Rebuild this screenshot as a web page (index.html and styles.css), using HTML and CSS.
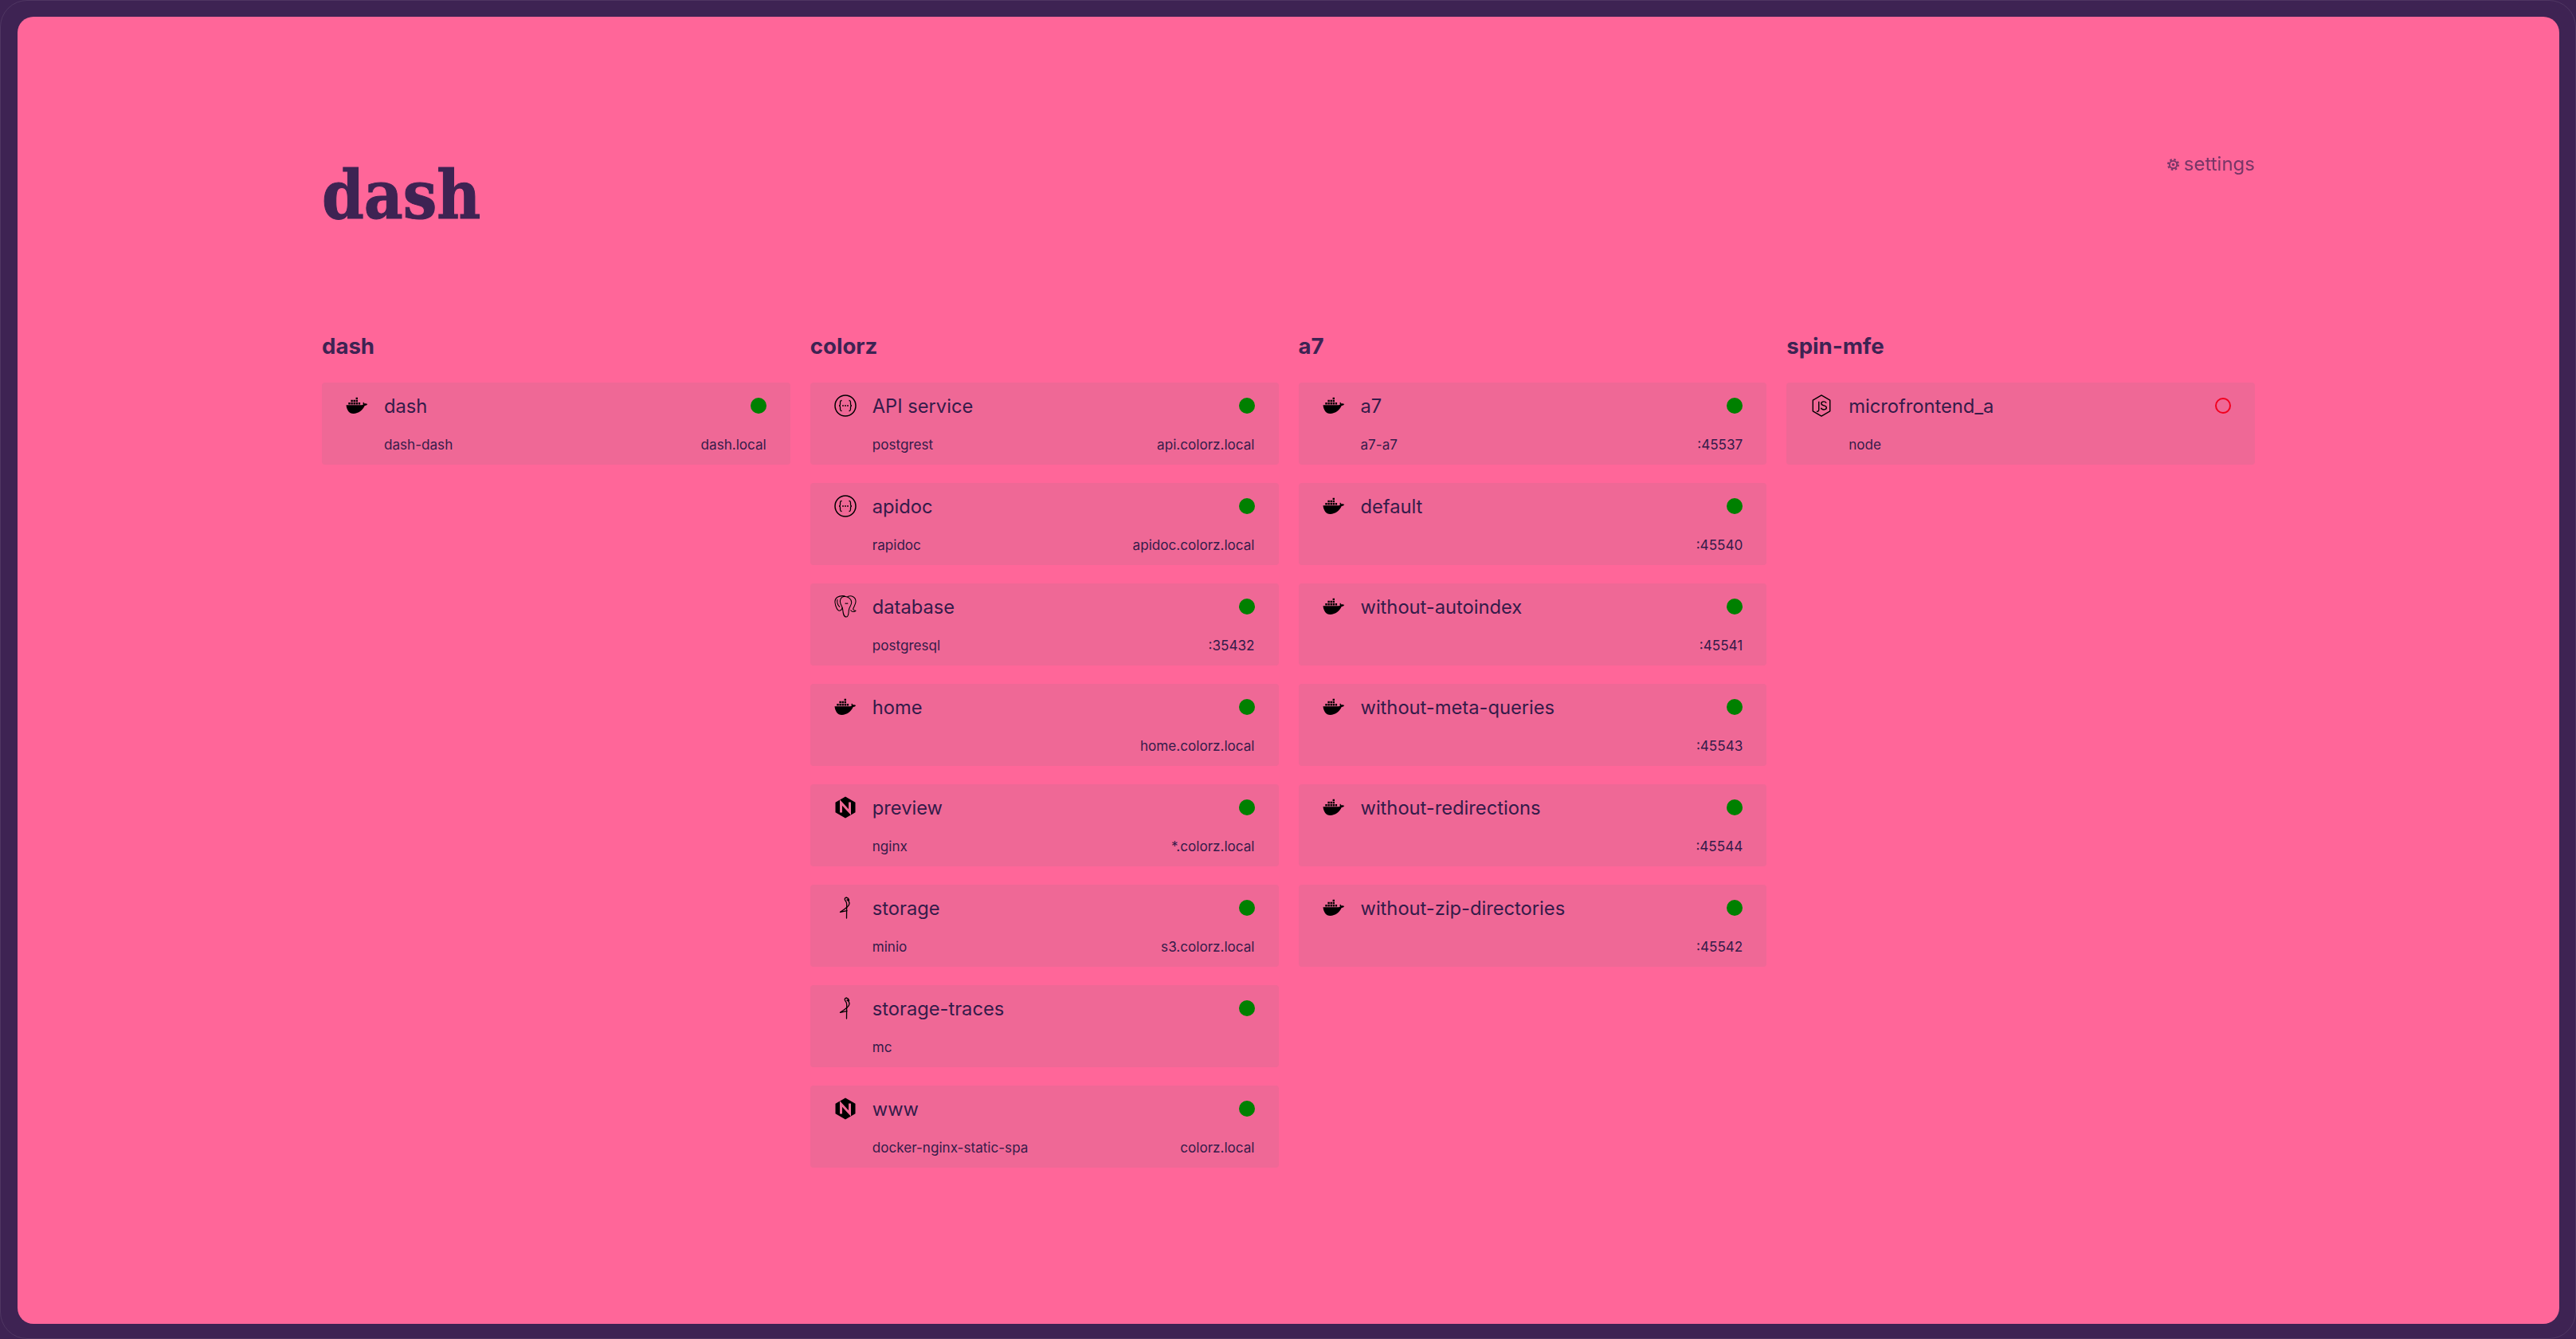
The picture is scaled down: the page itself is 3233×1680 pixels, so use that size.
FILE: index.html
```html
<!DOCTYPE html>
<html lang="en">
<head>
  <meta charset="UTF-8" />
  <title>dash</title>
  <link rel="stylesheet" href="styles.css">
</head>
<body>
  <svg class="sprites" width="0" height="0">
    <symbol id="i-docker" viewBox="0 0 28 22">
      <path fill="#000" d="M0.500 10.300H20c.8 0 1.500-.3 1.900-.8-.5-1-.5-2.200.1-3.100.8.5 1.300 1.200 1.500 2.100 1.100-.3 2.500-.2 3.700.6-.7 1.300-1.900 1.900-3.500 2C21.500 16.500 16 21 9.500 21 4 21 1.200 16.500.5 10.300z"/>
      <path fill="#000" d="M3.300 6.900h2.400v2.500H3.300zM6.400 6.900h2.400v2.500H6.400zM9.500 6.900h2.400v2.500H9.500zM12.600 6.900h2.400v2.500h-2.400zM15.700 6.900h2.400v2.500h-2.400zM6.400 3.800h2.400v2.400H6.400zM9.500 3.800h2.400v2.400H9.500zM12.600 3.800h2.400v2.400h-2.400zM12.600.7h2.400v2.400h-2.400z"/>
    </symbol>
    <symbol id="i-openapi" viewBox="0 0 28 28">
      <circle cx="14" cy="14" r="13" fill="none" stroke="#000" stroke-width="1.500"/>
      <path fill="none" stroke="#000" stroke-width="1.300" d="M9.500 7.500c-2 0-2 1-2 3v1.500c0 1.500-.5 2-1.500 2 1 0 1.500.5 1.500 2V17.500c0 2 0 3 2 3M18.500 7.500c2 0 2 1 2 3v1.500c0 1.500.5 2 1.500 2-1 0-1.500.5-1.500 2V17.500c0 2 0 3-2 3"/>
      <circle cx="11" cy="14" r=".9"/><circle cx="14" cy="14" r=".9"/><circle cx="17" cy="14" r=".9"/>
    </symbol>
    <symbol id="i-postgres" viewBox="0 0 28 29">
      <g fill="none" stroke="#000" stroke-width="1.100" stroke-linejoin="round" stroke-linecap="round">
        <path d="M13 .8C5 0 0 3 .5 9 1 14 3.500 20 6 20c2 0 3.500-2 4-4"/>
        <path d="M13 1.200C8 1.500 6.500 6 7.500 10c.7 3 2.500 4 3 8 .5 5 1 10 4.500 10s3-5 3.500-9c.5-4 3.500-6 3.500-10 0-4-4-7.500-9-7.800z"/>
        <path d="M17 1.500c5-2 10.500.5 10.500 6.500 0 4-3 7-3.500 10 1 2 3 2 3.500 2-2 2-5.500 1.500-6.500-.5"/>
        <path d="M14 10.500c1 .2 2 .2 3 0M3.500 5.500C3 9 4.500 13 6.500 15"/>
      </g>
    </symbol>
    <symbol id="i-nginx" viewBox="0 0 28 28">
      <path fill="#000" d="M14 .5l12.500 7.200v12.600L14 27.500 1.500 20.300V7.700z"/>
      <path fill="none" stroke="#f06a97" stroke-width="3" d="M8.500 20.500V8l11 12V7.500"/>
    </symbol>
    <symbol id="i-minio" viewBox="0 0 16 28">
      <g fill="none" stroke="#000" stroke-width="1.300" stroke-linecap="round" stroke-linejoin="round">
        <path d="M9.300 1.200C7.500 1.200 6.800 2.800 7.500 4.200c.8 1.600 2.300 2.500 2.200 5.300L9.500 27"/>
        <path d="M9.300 1.200c2 .3 3 1.800 3.300 3.400-.8-.5-1.800-.8-2.600-.6 1.800.8 3 2.300 3 4.400 0 3-3.500 5.500-11.500 11l8.500-1.800"/>
      </g>
    </symbol>
    <symbol id="i-node" viewBox="0 0 26 30">
      <path fill="none" stroke="#000" stroke-width="1.500" stroke-linejoin="round" d="M13 1l11.500 6.700v14.600L13 29 1.500 22.300V7.700z"/>
      <path fill="none" stroke="#000" stroke-width="1.500" d="M9.500 9.500v10.800c0 2.200-1.200 2.700-3 2.300"/>
      <path fill="none" stroke="#000" stroke-width="1.500" d="M19.500 11.500c-.7-1.500-2-2-3.400-2-2 0-3.300 1-3.300 2.600 0 3.600 7 1.900 7 5.400 0 1.800-1.500 2.800-3.500 2.800-1.800 0-3.300-.8-3.900-2.400"/>
    </symbol>
    <symbol id="i-gear" viewBox="0 0 16 16">
      <circle cx="8" cy="8" r="5" fill="none" stroke="#3e2353" stroke-width="2"/>
      <circle cx="8" cy="8" r="6.900" fill="none" stroke="#3e2353" stroke-width="2.200" stroke-dasharray="2.700 2.720"/>
      <circle cx="8" cy="8" r="1.900" fill="#3e2353"/>
    </symbol>
  </svg>

  <main class="panel">
    <div class="wrap">
      <header class="top">
        <h1 class="title">dash</h1>
        <a class="settings"><svg class="gear"><use href="#i-gear"/></svg> settings</a>
      </header>

      <div class="columns">
        <section class="col">
          <h2>dash</h2>
          <div class="card">
            <div class="row">
              <svg class="ico docker"><use href="#i-docker"/></svg>
              <span class="name">dash</span>
              <i class="dot"></i>
            </div>
            <div class="sub"><span>dash-dash</span><span>dash.local</span></div>
          </div>
        </section>

        <section class="col">
          <h2>colorz</h2>
          <div class="card">
            <div class="row">
              <svg class="ico"><use href="#i-openapi"/></svg>
              <span class="name">API service</span>
              <i class="dot"></i>
            </div>
            <div class="sub"><span>postgrest</span><span>api.colorz.local</span></div>
          </div>
          <div class="card">
            <div class="row">
              <svg class="ico"><use href="#i-openapi"/></svg>
              <span class="name">apidoc</span>
              <i class="dot"></i>
            </div>
            <div class="sub"><span>rapidoc</span><span>apidoc.colorz.local</span></div>
          </div>
          <div class="card">
            <div class="row">
              <svg class="ico"><use href="#i-postgres"/></svg>
              <span class="name">database</span>
              <i class="dot"></i>
            </div>
            <div class="sub"><span>postgresql</span><span>:35432</span></div>
          </div>
          <div class="card">
            <div class="row">
              <svg class="ico docker"><use href="#i-docker"/></svg>
              <span class="name">home</span>
              <i class="dot"></i>
            </div>
            <div class="sub"><span></span><span>home.colorz.local</span></div>
          </div>
          <div class="card">
            <div class="row">
              <svg class="ico"><use href="#i-nginx"/></svg>
              <span class="name">preview</span>
              <i class="dot"></i>
            </div>
            <div class="sub"><span>nginx</span><span>*.colorz.local</span></div>
          </div>
          <div class="card">
            <div class="row">
              <svg class="ico"><use href="#i-minio"/></svg>
              <span class="name">storage</span>
              <i class="dot"></i>
            </div>
            <div class="sub"><span>minio</span><span>s3.colorz.local</span></div>
          </div>
          <div class="card">
            <div class="row">
              <svg class="ico"><use href="#i-minio"/></svg>
              <span class="name">storage-traces</span>
              <i class="dot"></i>
            </div>
            <div class="sub"><span>mc</span><span></span></div>
          </div>
          <div class="card">
            <div class="row">
              <svg class="ico"><use href="#i-nginx"/></svg>
              <span class="name">www</span>
              <i class="dot"></i>
            </div>
            <div class="sub"><span>docker-nginx-static-spa</span><span>colorz.local</span></div>
          </div>
        </section>

        <section class="col">
          <h2>a7</h2>
          <div class="card">
            <div class="row">
              <svg class="ico docker"><use href="#i-docker"/></svg>
              <span class="name">a7</span>
              <i class="dot"></i>
            </div>
            <div class="sub"><span>a7-a7</span><span>:45537</span></div>
          </div>
          <div class="card">
            <div class="row">
              <svg class="ico docker"><use href="#i-docker"/></svg>
              <span class="name">default</span>
              <i class="dot"></i>
            </div>
            <div class="sub"><span></span><span>:45540</span></div>
          </div>
          <div class="card">
            <div class="row">
              <svg class="ico docker"><use href="#i-docker"/></svg>
              <span class="name">without-autoindex</span>
              <i class="dot"></i>
            </div>
            <div class="sub"><span></span><span>:45541</span></div>
          </div>
          <div class="card">
            <div class="row">
              <svg class="ico docker"><use href="#i-docker"/></svg>
              <span class="name">without-meta-queries</span>
              <i class="dot"></i>
            </div>
            <div class="sub"><span></span><span>:45543</span></div>
          </div>
          <div class="card">
            <div class="row">
              <svg class="ico docker"><use href="#i-docker"/></svg>
              <span class="name">without-redirections</span>
              <i class="dot"></i>
            </div>
            <div class="sub"><span></span><span>:45544</span></div>
          </div>
          <div class="card">
            <div class="row">
              <svg class="ico docker"><use href="#i-docker"/></svg>
              <span class="name">without-zip-directories</span>
              <i class="dot"></i>
            </div>
            <div class="sub"><span></span><span>:45542</span></div>
          </div>
        </section>

        <section class="col">
          <h2>spin-mfe</h2>
          <div class="card">
            <div class="row">
              <svg class="ico"><use href="#i-node"/></svg>
              <span class="name">microfrontend_a</span>
              <i class="dot off"></i>
            </div>
            <div class="sub"><span>node</span><span></span></div>
          </div>
        </section>
      </div>
    </div>
  </main>
</body>
</html>
```

FILE: styles.css
```css
* {
  box-sizing: border-box;
}

html, body {
  height: 100%;
}

body {
  margin: 0;
  padding: 21px 21px 19px 22px;
  background: #3e2353;
  color: #3e2353;
  font-family: Inter, sans-serif;
}

/* faint outer window edge */
body::before {
  content: "";
  position: fixed;
  inset: 0;
  border: 1px solid rgba(255, 255, 255, 0.09);
  border-radius: 34px;
  pointer-events: none;
}

.sprites {
  position: absolute;
}

.panel {
  height: 100%;
  background: #ff6699;
  border-radius: 20px;
  padding-top: 156px;
}

.wrap {
  width: 2426px;
  margin-left: 382px;
}

.top {
  display: flex;
  justify-content: space-between;
  align-items: flex-start;
  height: 240px;
}

.title {
  margin: 18px 0 0;
  font-family: "DejaVu Serif Condensed", "DejaVu Serif", serif;
  font-stretch: condensed;
  font-size: 84px;
  font-weight: 700;
  line-height: 100px;
  -webkit-text-stroke: 1px #3e2353;
}

.settings {
  display: flex;
  align-items: center;
  gap: 6px;
  height: 56px;
  font-size: 24px;
  opacity: 0.7;
}

.gear {
  width: 15px;
  height: 15px;
  margin-top: 2px;
}

.columns {
  display: grid;
  grid-template-columns: repeat(4, 1fr);
  gap: 25px;
  align-items: start;
}

.col h2 {
  margin: 0 0 29px;
  font-size: 27.6px;
  font-weight: 700;
  line-height: 34px;
}

.card {
  height: 103px;
  margin-bottom: 23px;
  padding: 14px 30px 0 30px;
  background: #ef6896;
  border-radius: 4px;
  color: #351b4a;
}

.row {
  display: flex;
  align-items: center;
  height: 32px;
}

.ico {
  flex: none;
  width: 28px;
  height: 28px;
  margin-right: 20px;
  position: relative;
  top: -1px;
}

.name {
  flex: 1;
  font-size: 23.7px;
  line-height: 32px;
}

.dot {
  flex: none;
  width: 20px;
  height: 20px;
  margin-bottom: 2px;
  border-radius: 50%;
  background: #008000;
}

.dot.off {
  background: none;
  border: 2px solid #f2001f;
}

.sub {
  display: flex;
  justify-content: space-between;
  height: 24px;
  margin-top: 20px;
  padding-left: 48px;
  font-size: 17.100px;
  line-height: 24px;
}
```
